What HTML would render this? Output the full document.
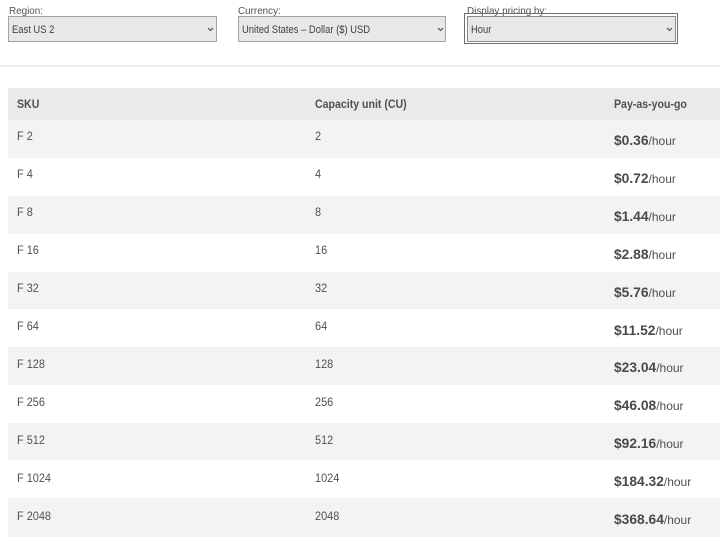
<!DOCTYPE html>
<html>
<head>
<meta charset="utf-8">
<style>
html,body{margin:0;padding:0;background:#fff}
body{width:720px;height:541px;overflow:hidden;position:relative;font-family:"Liberation Sans",sans-serif;color:#505050}
#w{position:absolute;left:0;top:0;width:720px;height:541px;filter:blur(.35px)}
.a{position:absolute;white-space:nowrap}
.l{font-size:10.5px;line-height:12px;color:#505050;transform:scaleX(.94);transform-origin:left center}
.s{position:absolute;top:16px;height:24px;background:#e8e8ea;border:1px solid #a4a4a4;font-size:11px;line-height:24px;color:#404040}
.s span{position:absolute;left:3px;top:1px;white-space:nowrap;transform:scaleX(.855);transform-origin:left center}
.s svg{position:absolute;top:10px}
.r{position:absolute;left:8px;width:712px}
.o{background:#f2f3f5}
.c{position:absolute;font-size:11.5px;white-space:nowrap;color:#505050;transform:scaleX(.95);transform-origin:left center}
.h{position:absolute;top:99px;font-size:11.5px;font-weight:bold;white-space:nowrap;color:#505050;transform:scaleX(.92);transform-origin:left center}
.p{position:absolute;left:614px;white-space:nowrap;font-size:12px;color:#505050}
.p b{font-size:13.8px;color:#4a4a4a}
</style>
</head>
<body>
<div id="w">
<div class="a l" style="left:9px;top:5px">Region:</div>
<div class="a l" style="left:238px;top:5px">Currency:</div>
<div class="a l" style="left:467px;top:5px">Display pricing by:</div>

<div class="s" style="left:8px;width:207px"><span>East US 2</span><svg width="8" height="5" style="left:198px"><path d="M1 1L3.5 3.5L6 1" fill="none" stroke="#444" stroke-width="1.1"/></svg></div>
<div class="s" style="left:238px;width:206px"><span>United States – Dollar ($) USD</span><svg width="8" height="5" style="left:198px"><path d="M1 1L3.5 3.5L6 1" fill="none" stroke="#444" stroke-width="1.1"/></svg></div>
<div class="a" style="left:464px;top:13px;width:212px;height:29px;border:1px solid #6e6e6e"></div>
<div class="s" style="left:467px;width:207px;border-color:#8a8a8a"><span>Hour</span><svg width="8" height="5" style="left:198px"><path d="M1 1L3.5 3.5L6 1" fill="none" stroke="#444" stroke-width="1.1"/></svg></div>

<div class="a" style="left:0;top:65px;width:720px;height:2px;background:#efefef"></div>

<div class="r" style="top:88px;height:32px;background:#e9eaec"></div>
<div class="h" style="left:17px">SKU</div>
<div class="h" style="left:315px">Capacity unit (CU)</div>
<div class="h" style="left:614px">Pay-as-you-go</div>

<div class="r o" style="top:120px;height:38px"></div>
<div class="r o" style="top:196px;height:38px"></div>
<div class="r o" style="top:272px;height:37px"></div>
<div class="r o" style="top:347px;height:38px"></div>
<div class="r o" style="top:423px;height:37px"></div>
<div class="r o" style="top:498px;height:39px"></div>

<div class="c" style="left:17px;top:131px">F 2</div><div class="c" style="left:315px;top:131px">2</div><div class="p" style="top:133px"><b>$0.36</b>/hour</div>
<div class="c" style="left:17px;top:169px">F 4</div><div class="c" style="left:315px;top:169px">4</div><div class="p" style="top:171px"><b>$0.72</b>/hour</div>
<div class="c" style="left:17px;top:207px">F 8</div><div class="c" style="left:315px;top:207px">8</div><div class="p" style="top:209px"><b>$1.44</b>/hour</div>
<div class="c" style="left:17px;top:245px">F 16</div><div class="c" style="left:315px;top:245px">16</div><div class="p" style="top:247px"><b>$2.88</b>/hour</div>
<div class="c" style="left:17px;top:283px">F 32</div><div class="c" style="left:315px;top:283px">32</div><div class="p" style="top:285px"><b>$5.76</b>/hour</div>
<div class="c" style="left:17px;top:321px">F 64</div><div class="c" style="left:315px;top:321px">64</div><div class="p" style="top:323px"><b>$11.52</b>/hour</div>
<div class="c" style="left:17px;top:359px">F 128</div><div class="c" style="left:315px;top:359px">128</div><div class="p" style="top:360px"><b>$23.04</b>/hour</div>
<div class="c" style="left:17px;top:397px">F 256</div><div class="c" style="left:315px;top:397px">256</div><div class="p" style="top:398px"><b>$46.08</b>/hour</div>
<div class="c" style="left:17px;top:435px">F 512</div><div class="c" style="left:315px;top:435px">512</div><div class="p" style="top:436px"><b>$92.16</b>/hour</div>
<div class="c" style="left:17px;top:473px">F 1024</div><div class="c" style="left:315px;top:473px">1024</div><div class="p" style="top:474px"><b>$184.32</b>/hour</div>
<div class="c" style="left:17px;top:511px">F 2048</div><div class="c" style="left:315px;top:511px">2048</div><div class="p" style="top:512px"><b>$368.64</b>/hour</div>
</div>
</body>
</html>
